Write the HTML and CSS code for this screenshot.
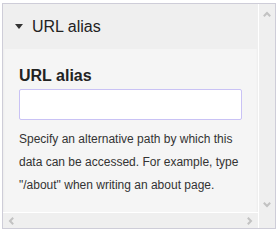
FILE: index.html
```html
<!DOCTYPE html>
<html lang="en">
<head>
  <meta charset="UTF-8" />
  <title>URL alias</title>
  <link rel="stylesheet" href="styles.css">
</head>
<body>
  <div class="frame">
    <div class="view">
      <details class="panel" open>
        <summary class="panel-title">URL alias</summary>
        <div class="panel-body">
          <label for="alias">URL alias</label>
          <input type="text" id="alias" />
          <p class="help">Specify an alternative path by which this data can be accessed. For example, type "/about" when writing an about page.</p>
        </div>
      </details>
    </div>

    <div class="vbar">
      <svg width="8" height="6" viewBox="0 0 8 6"><polyline points="0.8,5.2 4,2 7.2,5.2" fill="none" stroke="#c2c2c2" stroke-width="2" /></svg>
      <svg width="8" height="6" viewBox="0 0 8 6"><polyline points="0.8,0.8 4,4 7.2,0.8" fill="none" stroke="#c2c2c2" stroke-width="2" /></svg>
    </div>

    <div class="hbar">
      <svg width="6" height="8" viewBox="0 0 6 8"><polyline points="5.2,0.8 2,4 5.2,7.2" fill="none" stroke="#c2c2c2" stroke-width="2" /></svg>
      <svg width="6" height="8" viewBox="0 0 6 8"><polyline points="0.8,0.8 4,4 0.8,7.2" fill="none" stroke="#c2c2c2" stroke-width="2" /></svg>
    </div>
  </div>
</body>
</html>
```

FILE: styles.css
```css
body {
  margin: 0;
  background-color: #fff;
  font-family: Arial, "Liberation Sans", sans-serif;
  color: #333;
}

.frame {
  margin: 3px 0 0 2px;
  width: 272px;
  height: 224px;
  border: 1px solid #cecdd8;
  display: grid;
  grid-template-columns: 1fr 17px;
  grid-template-rows: 1fr 16px;
}

.view {
  overflow: hidden;
  background-color: #f5f5f5;
  box-shadow: inset 0 2px 3px rgba(0, 0, 0, 0.07);
}

.panel {
  margin: 0;
}

.panel-title {
  background-color: #efefef;
  padding: 14px 10px 13px 10px;
  font-size: 16px;
  line-height: 18px;
  color: #222;
  cursor: pointer;
  list-style: none;
}

.panel-title::-webkit-details-marker {
  display: none;
}

.panel-title::before {
  content: "";
  display: inline-block;
  border-left: 4px solid transparent;
  border-right: 4px solid transparent;
  border-top: 5px solid #333;
  margin: 0 9px 3px 2px;
  vertical-align: middle;
}

.panel-body {
  padding: 18px 16px 10px 16px;
}

.panel-body label {
  display: block;
  font-weight: bold;
  font-size: 16px;
  line-height: 18px;
  color: #222;
  margin-bottom: 4px;
}

.panel-body input {
  display: block;
  box-sizing: border-box;
  width: 223px;
  height: 31px;
  margin: 0;
  border: 1px solid #c9c2f5;
  border-radius: 2px;
  background-color: #fff;
}

.help {
  margin: 8px 0 0 0;
  font-size: 12px;
  line-height: 23px;
  color: #333;
}

.vbar {
  grid-column: 2;
  grid-row: 1 / 3;
  background-color: #efefef;
  border-left: 1px solid #fff;
  display: flex;
  flex-direction: column;
  justify-content: space-between;
  align-items: center;
  padding: 7px 0 20px 0;
}

.hbar {
  grid-column: 1;
  grid-row: 2;
  background-color: #efefef;
  border-top: 1px solid #fff;
  display: flex;
  justify-content: space-between;
  align-items: center;
  padding: 0 5px;
}

.vbar svg,
.hbar svg {
  display: block;
}
```
